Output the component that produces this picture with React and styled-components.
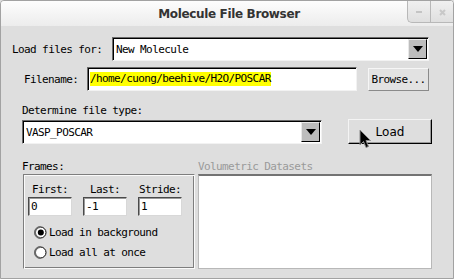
import React from "react";
import styled, { createGlobalStyle } from "styled-components";

const GlobalStyle = createGlobalStyle`
  html, body {
    margin: 0;
    padding: 0;
    background: #dedede;
  }
`;

const MONO = `"DejaVu Sans Mono", "Liberation Mono", monospace`;

export default function App() {
  return (
    <>
      <GlobalStyle />
      <Window>
        <TitleBar>
          <span />
          <Title>Molecule File Browser</Title>
          <WinButtons>
            <WinButton $first>
              <svg width="6" height="3" viewBox="0 0 6 3">
                <rect x="0" y="0" width="6" height="2" fill="#c4c4c4" />
              </svg>
            </WinButton>
            <WinButton>
              <svg width="7" height="7" viewBox="0 0 7 7">
                <path d="M1 1 L6 6 M6 1 L1 6" stroke="#c8c8c8" strokeWidth="2" />
              </svg>
            </WinButton>
          </WinButtons>
        </TitleBar>

        <Body>
          <Row $top={11}>
            <Label $width={100}>Load files for:</Label>
            <Dropdown $width={317}>
              <DropText>New Molecule</DropText>
              <ArrowButton>
                <svg width="10" height="6" viewBox="0 0 10 6">
                  <path d="M0 0 H10 L5 6 Z" fill="#000" />
                </svg>
              </ArrowButton>
            </Dropdown>
          </Row>

          <Row $top={6} $indent={12}>
            <Label $width={63}>Filename:</Label>
            <Entry $width={270}>
              <Highlight>/home/cuong/beehive/H2O/POSCAR</Highlight>
            </Entry>
            <BrowseButton>Browse...</BrowseButton>
          </Row>

          <SectionLabel $top={13}>Determine file type:</SectionLabel>

          <Row $top={2} $indent={10}>
            <Dropdown $width={300}>
              <DropText>VASP_POSCAR</DropText>
              <ArrowButton>
                <svg width="10" height="6" viewBox="0 0 10 6">
                  <path d="M0 0 H10 L5 6 Z" fill="#000" />
                </svg>
              </ArrowButton>
            </Dropdown>
            <LoadButton>
              Load
              <Cursor width="13" height="20" viewBox="0 0 13 20">
                <path
                  d="M1 1 L1 16 L4.5 12.5 L7 18.5 L9.5 17.5 L7 11.5 L11.5 11.5 Z"
                  fill="#000"
                  stroke="#8a8a8a"
                  strokeWidth="1"
                  strokeLinejoin="round"
                />
              </Cursor>
            </LoadButton>
          </Row>

          <Columns>
            <Column>
              <SectionLabel>Frames:</SectionLabel>
              <FrameBox>
                <FieldGrid>
                  <Field>
                    <FieldLabel>First:</FieldLabel>
                    <SmallEntry>0</SmallEntry>
                  </Field>
                  <Field>
                    <FieldLabel>Last:</FieldLabel>
                    <SmallEntry>-1</SmallEntry>
                  </Field>
                  <Field>
                    <FieldLabel>Stride:</FieldLabel>
                    <SmallEntry>1</SmallEntry>
                  </Field>
                </FieldGrid>
                <RadioRow>
                  <Radio checked />
                  Load in background
                </RadioRow>
                <RadioRow>
                  <Radio />
                  Load all at once
                </RadioRow>
              </FrameBox>
            </Column>
            <Column>
              <SectionLabel $disabled $indent={0}>Volumetric Datasets</SectionLabel>
              <ListBox />
            </Column>
          </Columns>
        </Body>
      </Window>
    </>
  );
}

function Radio({ checked }) {
  return (
    <svg width="13" height="13" viewBox="0 0 13 13">
      <circle cx="6.5" cy="6.5" r="5.5" fill="#fff" stroke="#000" strokeWidth="1" />
      <path d="M6.5 1 A5.5 5.5 0 0 0 6.5 12" fill="none" stroke="#6a6a6a" strokeWidth="2" />
      {checked && <circle cx="6.8" cy="6.5" r="3" fill="#000" />}
    </svg>
  );
}

const Window = styled.div`
  width: 454px;
  height: 279px;
  box-sizing: border-box;
  border: 1px solid #a2a2a2;
  border-radius: 4px 4px 0 0;
  background: #dedede;
  overflow: hidden;
  display: flex;
  flex-direction: column;
  font-family: ${MONO};
  font-size: 11px;
  letter-spacing: -0.6px;
  color: #000;
`;

const TitleBar = styled.div`
  height: 25px;
  flex: none;
  display: grid;
  grid-template-columns: 1fr auto 1fr;
  align-items: start;
  background: linear-gradient(#fdfdfd, #ececec);
`;

const Title = styled.div`
  font-family: "DejaVu Sans", sans-serif;
  font-weight: bold;
  font-size: 12px;
  letter-spacing: -0.35px;
  color: #333;
  line-height: 26px;
  padding-left: 4px;
`;

const WinButtons = styled.div`
  justify-self: end;
  display: flex;
`;

const WinButton = styled.div`
  width: 23px;
  height: 22px;
  display: flex;
  align-items: center;
  justify-content: center;
  padding-top: 2px;
  box-sizing: border-box;
  background: linear-gradient(#f0f0f0, #dfdfdf);
  border-left: 1px solid #b8b8b8;
  border-bottom: 1px solid #b8b8b8;
  border-bottom-left-radius: ${(p) => (p.$first ? "5px" : "0")};
`;

const Body = styled.div`
  flex: 1;
  display: flex;
  flex-direction: column;
  padding-left: 11px;
`;

const Row = styled.div`
  display: flex;
  align-items: center;
  margin-top: ${(p) => p.$top || 0}px;
  padding-left: ${(p) => p.$indent || 0}px;
`;

const Label = styled.div`
  width: ${(p) => p.$width}px;
  flex: none;
`;

const SectionLabel = styled.div`
  margin-top: ${(p) => p.$top || 0}px;
  padding-left: ${(p) => (p.$indent ?? 10)}px;
  line-height: 13px;
  color: ${(p) => (p.$disabled ? "#9a9a9a" : "#000")};
`;

const Sunken = styled.div`
  box-sizing: border-box;
  background: #fff;
  border: 1px solid;
  border-color: #6a6a6a #f2f2f2 #f2f2f2 #6a6a6a;
  box-shadow: inset 1px 1px 0 #000;
`;

const Dropdown = styled(Sunken)`
  width: ${(p) => p.$width}px;
  height: 24px;
  display: flex;
  align-items: center;
  justify-content: space-between;
  padding: 0 1px 0 3px;
`;

const DropText = styled.span`
  padding-top: 1px;
`;

const ArrowButton = styled.div`
  width: 19px;
  height: 20px;
  box-sizing: border-box;
  display: flex;
  align-items: center;
  justify-content: center;
  background: #bdbdbd;
  border: 1px solid;
  border-color: #e8e8e8 #000 #000 #e8e8e8;
`;

const Entry = styled(Sunken)`
  width: ${(p) => p.$width}px;
  height: 24px;
  display: flex;
  align-items: center;
  padding-left: 2px;
`;

const Highlight = styled.span`
  background: #ffff00;
  line-height: 14px;
`;

const BrowseButton = styled.div`
  margin-left: 11px;
  width: 61px;
  height: 23px;
  box-sizing: border-box;
  display: flex;
  align-items: center;
  justify-content: center;
  background: #e2e2e2;
  border: 1px solid;
  border-color: #f6f6f6 #8a8a8a #8a8a8a #f6f6f6;
`;

const LoadButton = styled.div`
  position: relative;
  margin-left: 26px;
  width: 84px;
  height: 25px;
  box-sizing: border-box;
  display: flex;
  align-items: center;
  justify-content: center;
  font-family: "DejaVu Sans", sans-serif;
  font-size: 12px;
  letter-spacing: 0;
  background: #dedede;
  border: 1px solid;
  border-color: #f4f4f4 #000 #000 #f4f4f4;
  box-shadow: inset -1px -1px 0 #9a9a9a;
`;

const Cursor = styled.svg`
  position: absolute;
  left: 10px;
  top: 9px;
`;

const Columns = styled.div`
  display: flex;
  margin-top: 16px;
  gap: 3px;
`;

const Column = styled.div`
  display: flex;
  flex-direction: column;
`;

const FrameBox = styled.div`
  margin-left: 11px;
  margin-top: 1px;
  width: 172px;
  height: 95px;
  box-sizing: border-box;
  border: 1px solid;
  border-color: #7e7e7e #fafafa #fafafa #7e7e7e;
  box-shadow: inset 1px 1px 0 #fafafa, inset -1px -1px 0 #7e7e7e;
  padding: 9px 0 0 4px;
  display: flex;
  flex-direction: column;
`;

const FieldGrid = styled.div`
  display: grid;
  grid-template-columns: repeat(3, 44px);
  column-gap: 11px;
  margin-bottom: 6px;
`;

const Field = styled.div`
  display: flex;
  flex-direction: column;
  align-items: center;
`;

const FieldLabel = styled.div`
  line-height: 12px;
  margin-bottom: 1px;
`;

const SmallEntry = styled.div`
  width: 44px;
  height: 19px;
  box-sizing: border-box;
  background: #fff;
  border: 1px solid;
  border-color: #4a4a4a #d8d8d8 #d8d8d8 #4a4a4a;
  box-shadow: inset 1px 1px 0 #9a9a9a;
  padding-left: 2px;
  line-height: 17px;
`;

const RadioRow = styled.div`
  display: flex;
  align-items: center;
  gap: 2px;
  height: 20px;
  padding-left: 6px;
`;

const ListBox = styled.div`
  margin-top: 1px;
  width: 234px;
  height: 95px;
  box-sizing: border-box;
  background: #fff;
  border: 1px solid #b8b8b8;
  border-top: 2px solid #737373;
`;
